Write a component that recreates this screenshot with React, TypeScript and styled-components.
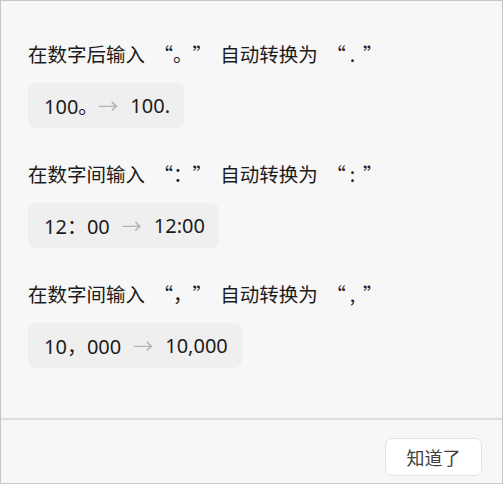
import React from 'react';
import styled, { createGlobalStyle } from 'styled-components';

const GlobalStyle = createGlobalStyle`
  html, body {
    margin: 0;
    padding: 0;
    background: #f7f7f7;
  }
  * {
    box-sizing: border-box;
  }
`;

const Dialog = styled.div`
  width: 503px;
  height: 484px;
  border: 1px solid #c6c6c6;
  background: #f7f7f7;
  display: flex;
  flex-direction: column;
  font-family: 'Noto Sans CJK SC', sans-serif;
  color: #1b1b1b;
  text-spacing-trim: space-all;
`;

const Content = styled.div`
  flex: 1;
  padding: 39px 27px 0;
  display: flex;
  flex-direction: column;
  gap: 32px;
`;

const Rule = styled.div`
  display: flex;
  flex-direction: column;
  align-items: flex-start;
  gap: 16px;
`;

const Title = styled.div`
  font-size: 19.5px;
  line-height: 27px;
  white-space: pre;
  word-spacing: 4px;
`;

const HalfMark = styled.span`
  margin: 0 8px 0 4px;
`;

const Chip = styled.div`
  height: 45px;
  padding: 0 14px 0 16px;
  display: flex;
  align-items: center;
  background: #efefef;
  border-radius: 8px;
  font-family: 'Noto Sans', 'Noto Sans CJK SC', sans-serif;
  font-size: 20px;
  white-space: pre;
`;

const Arrow = styled.span<{ $tight?: boolean }>`
  color: #b4b4b4;
  margin: 0 12px 0 ${(p) => (p.$tight ? '0' : '12px')};
`;

const Footer = styled.div`
  height: 65px;
  border-top: 2px solid #dddddd;
  display: flex;
  justify-content: flex-end;
  align-items: flex-start;
  padding: 18px 20px 0 0;
`;

const OkButton = styled.button`
  width: 97px;
  height: 38px;
  background: #ffffff;
  border: 1px solid #e3e3e3;
  border-radius: 7px;
  font-family: 'Noto Sans CJK SC', sans-serif;
  font-size: 18px;
  color: #404040;
  cursor: pointer;
`;

const rules = [
  { lead: '在数字后输入', src: '。', dst: '.', from: '100。', to: '100.', tight: true },
  { lead: '在数字间输入', src: '：', dst: ':', from: '12：00', to: '12:00', tight: false },
  { lead: '在数字间输入', src: '，', dst: ',', from: '10，000', to: '10,000', tight: false },
];

export default function App() {
  return (
    <>
      <GlobalStyle />
      <Dialog lang="zh-CN">
        <Content>
          {rules.map((r) => (
            <Rule key={r.from}>
              <Title>
                {r.lead} “{r.src}” 自动转换为 “<HalfMark>{r.dst}</HalfMark>”
              </Title>
              <Chip>
                {r.from}
                <Arrow $tight={r.tight}>→</Arrow>
                {r.to}
              </Chip>
            </Rule>
          ))}
        </Content>
        <Footer>
          <OkButton>知道了</OkButton>
        </Footer>
      </Dialog>
    </>
  );
}
